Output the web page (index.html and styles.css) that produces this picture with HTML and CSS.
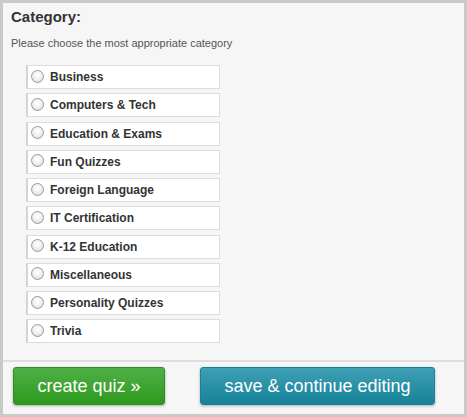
FILE: index.html
```html
<!DOCTYPE html>
<html lang="en">
  <head>
    <meta charset="UTF-8" />
    <meta name="viewport" content="width=device-width, initial-scale=1" />
    <title>Category</title>
    <link rel="stylesheet" href="styles.css">
  </head>
  <body>
    <div class="panel">
      <div class="panel-body">
        <h3 class="title">Category:</h3>
        <p class="hint">Please choose the most appropriate category</p>
        <ul class="cat-list">
          <li><label class="cat"><input type="radio" name="category" /><span>Business</span></label></li>
          <li><label class="cat"><input type="radio" name="category" /><span>Computers &amp; Tech</span></label></li>
          <li><label class="cat"><input type="radio" name="category" /><span>Education &amp; Exams</span></label></li>
          <li><label class="cat"><input type="radio" name="category" /><span>Fun Quizzes</span></label></li>
          <li><label class="cat"><input type="radio" name="category" /><span>Foreign Language</span></label></li>
          <li><label class="cat"><input type="radio" name="category" /><span>IT Certification</span></label></li>
          <li><label class="cat"><input type="radio" name="category" /><span>K-12 Education</span></label></li>
          <li><label class="cat"><input type="radio" name="category" /><span>Miscellaneous</span></label></li>
          <li><label class="cat"><input type="radio" name="category" /><span>Personality Quizzes</span></label></li>
          <li><label class="cat"><input type="radio" name="category" /><span>Trivia</span></label></li>
        </ul>
      </div>
      <div class="panel-foot">
        <button class="btn btn-green">create quiz &raquo;</button>
        <button class="btn btn-blue">save &amp; continue editing</button>
      </div>
    </div>
  </body>
</html>
```

FILE: styles.css
```css
html, body {
  margin: 0;
  padding: 0;
  background: #c9c9c9;
  font-family: Arial, "Liberation Sans", sans-serif;
}

.panel {
  box-sizing: border-box;
  width: 467px;
  height: 417px;
  border: 3px solid #c9c9c9;
  background: #f6f6f6;
  display: flex;
  flex-direction: column;
}

.panel-body {
  flex: 1;
  padding: 5px 0 0 8px;
}

.title {
  margin: 0;
  font-size: 15px;
  line-height: 18px;
  font-weight: bold;
  color: #333;
}

.hint {
  margin: 10px 0 0;
  font-size: 11px;
  line-height: 14px;
  color: #555;
}

.cat-list {
  list-style: none;
  margin: 15px 0 0 15px;
  padding: 0;
}

.cat-list li {
  margin-bottom: 4.25px;
}

.cat {
  box-sizing: border-box;
  display: flex;
  align-items: center;
  width: 194px;
  height: 24px;
  padding-left: 3px;
  background: #fff;
  border: 1px solid #dcdcdc;
  border-left: 2px solid #d4d4d4;
  font-size: 12px;
  font-weight: bold;
  color: #333;
}

.cat input {
  appearance: none;
  -webkit-appearance: none;
  box-sizing: border-box;
  width: 13px;
  height: 13px;
  margin: 0 6px 2px 0;
  border-radius: 50%;
  border: 1px solid #9a9a9a;
  background: radial-gradient(circle at 50% 40%, #ffffff 0%, #f2f2f2 45%, #cfcfcf 100%);
}

.panel-foot {
  border-top: 2px solid #dedede;
  padding: 5px 0 9px 10px;
  display: flex;
  gap: 35px;
}

.btn {
  height: 38px;
  border-radius: 3px;
  font-family: Arial, "Liberation Sans", sans-serif;
  font-size: 18px;
  color: #fff;
  cursor: pointer;
  box-shadow: 0 1px 3px rgba(0, 0, 0, 0.3);
}

.btn-green {
  width: 152px;
  border: 1px solid #2f8d22;
  background: linear-gradient(#50b047, #2c9a1c);
}

.btn-blue {
  width: 235px;
  border: 1px solid #1c7f94;
  background: linear-gradient(#3f9fb4, #15839a);
}
```
